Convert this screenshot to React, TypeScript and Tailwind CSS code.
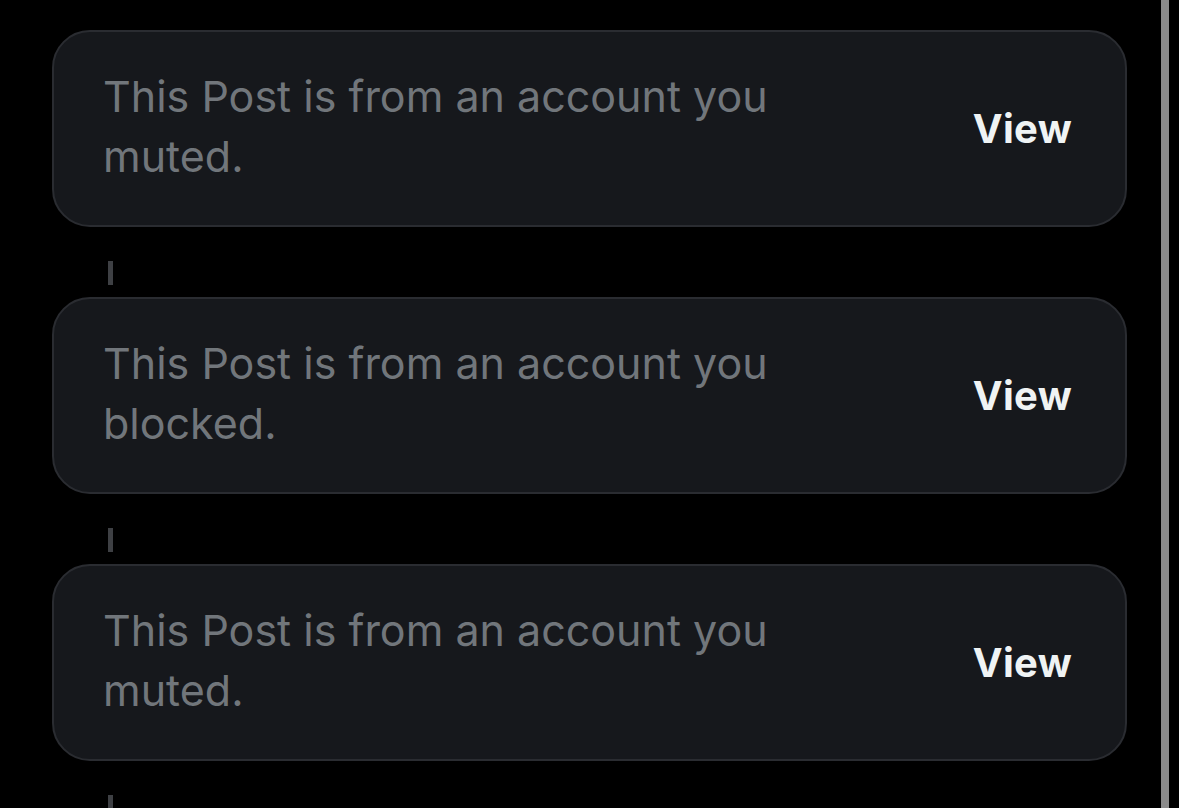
import React from "react";

type Hidden = {
  id: number;
  reason: string;
};

const items: Hidden[] = [
  { id: 1, reason: "muted" },
  { id: 2, reason: "blocked" },
  { id: 3, reason: "muted" },
];

const Tick = () => (
  <div className="shrink-0 h-[70px] pt-[34px] pl-[56px]">
    <div className="w-[5px] h-[24px] bg-[#3e4044]" />
  </div>
);

const HiddenPost = ({ reason }: { reason: string }) => (
  <div className="shrink-0 flex items-center justify-between h-[197px] rounded-[38px] border-2 border-[#2a2c31] bg-[#16181c] pl-[49px] pr-[53px]">
    <p className="w-[760px] pb-[5px] text-[43px] leading-[60px] text-[#71767b] tracking-[0px]">
      This Post is from an account you {reason}.
    </p>
    <button className="text-[40px] font-bold text-[#eff3f4] tracking-[0.3px]">View</button>
  </div>
);

export default function App() {
  return (
    <div
      className="flex w-[1179px] h-[808px] overflow-hidden bg-black"
      style={{ fontFamily: "Inter, 'Noto Sans', sans-serif" }}
    >
      <div className="flex-1 flex flex-col pt-[30px] pl-[52px] pr-[34px]">
        {items.map((item) => (
          <React.Fragment key={item.id}>
            <HiddenPost reason={item.reason} />
            <Tick />
          </React.Fragment>
        ))}
      </div>
      <div className="w-[8px] h-full bg-[#8b8b8b]" />
      <div className="w-[10px]" />
    </div>
  );
}
